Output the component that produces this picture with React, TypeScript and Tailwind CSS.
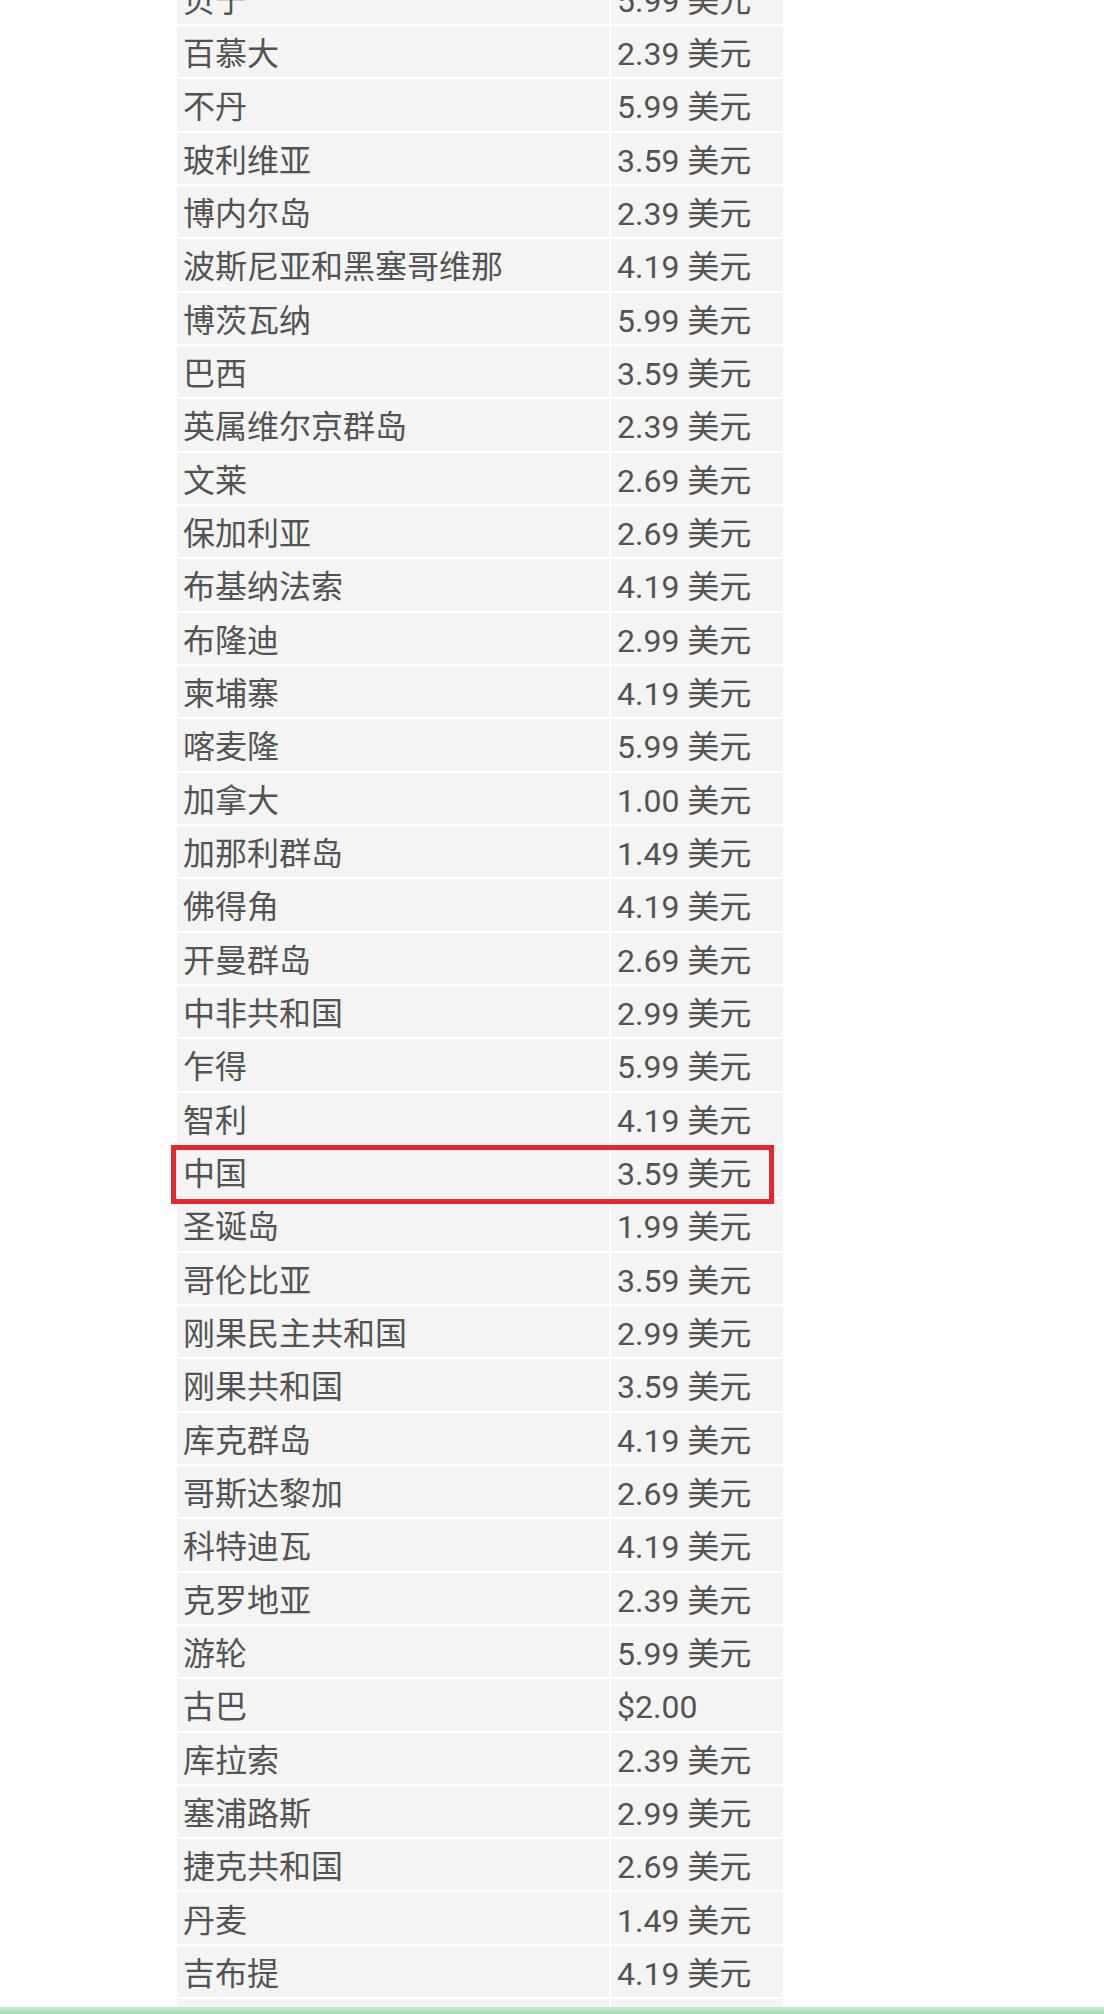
import React from "react";

const rows: [string, string][] = [
  ["贝宁", "5.99 美元"],
  ["百慕大", "2.39 美元"],
  ["不丹", "5.99 美元"],
  ["玻利维亚", "3.59 美元"],
  ["博内尔岛", "2.39 美元"],
  ["波斯尼亚和黑塞哥维那", "4.19 美元"],
  ["博茨瓦纳", "5.99 美元"],
  ["巴西", "3.59 美元"],
  ["英属维尔京群岛", "2.39 美元"],
  ["文莱", "2.69 美元"],
  ["保加利亚", "2.69 美元"],
  ["布基纳法索", "4.19 美元"],
  ["布隆迪", "2.99 美元"],
  ["柬埔寨", "4.19 美元"],
  ["喀麦隆", "5.99 美元"],
  ["加拿大", "1.00 美元"],
  ["加那利群岛", "1.49 美元"],
  ["佛得角", "4.19 美元"],
  ["开曼群岛", "2.69 美元"],
  ["中非共和国", "2.99 美元"],
  ["乍得", "5.99 美元"],
  ["智利", "4.19 美元"],
  ["中国", "3.59 美元"],
  ["圣诞岛", "1.99 美元"],
  ["哥伦比亚", "3.59 美元"],
  ["刚果民主共和国", "2.99 美元"],
  ["刚果共和国", "3.59 美元"],
  ["库克群岛", "4.19 美元"],
  ["哥斯达黎加", "2.69 美元"],
  ["科特迪瓦", "4.19 美元"],
  ["克罗地亚", "2.39 美元"],
  ["游轮", "5.99 美元"],
  ["古巴", "$2.00"],
  ["库拉索", "2.39 美元"],
  ["塞浦路斯", "2.99 美元"],
  ["捷克共和国", "2.69 美元"],
  ["丹麦", "1.49 美元"],
  ["吉布提", "4.19 美元"],
  ["", ""],
];

export default function App() {
  return (
    <div
      className="flex h-[2014px] w-full flex-col overflow-hidden bg-white text-[32px] text-[#535353]"
      style={{ fontFamily: '"Roboto", "Noto Sans CJK SC", sans-serif' }}
    >
      <div className="h-[2007px] overflow-hidden">
        <div className="-mt-[27.33px] ml-[177px] grid w-[606px] grid-cols-[432px_172px] gap-[2px]">
          {rows.map(([name, price], i) => {
            const hl = name === "中国";
            return (
              <div key={i} className="relative col-span-2 grid grid-cols-[432px_172px] gap-[2px]">
                <div className="flex h-[51.33px] items-center bg-[#f4f4f4] pl-[6px] pt-[5px] leading-none">
                  {name}
                </div>
                <div className="flex h-[51.33px] items-center bg-[#f4f4f4] pl-[6px] pt-[5px] leading-none whitespace-nowrap">
                  {price}
                </div>
                {hl && (
                  <div className="pointer-events-none absolute -left-[6px] -top-[1px] z-10 h-[59px] w-[603px] border-[5px] border-[#e8242c]" />
                )}
              </div>
            );
          })}
        </div>
      </div>
      <div className="h-[7px] bg-gradient-to-b from-[#c8ecd2] to-[#a6dbb4]" />
    </div>
  );
}
